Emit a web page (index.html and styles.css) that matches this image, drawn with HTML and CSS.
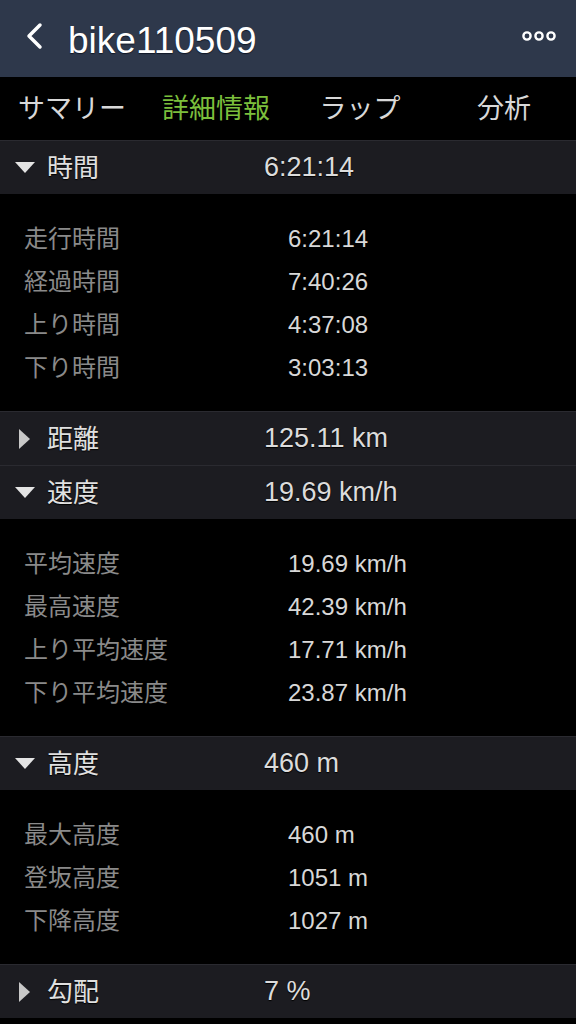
FILE: index.html
```html
<!DOCTYPE html>
<html lang="ja">
<head>
  <meta charset="UTF-8" />
  <meta name="viewport" content="width=device-width, initial-scale=1.0" />
  <title>bike110509</title>
  <link rel="stylesheet" href="styles.css">
</head>
<body>
  <header class="topbar">
    <svg class="back" width="20" height="28" viewBox="0 0 20 28">
      <path d="M15 3 L4 14 L15 25" fill="none" stroke="#fff" stroke-width="3.5" stroke-linecap="round" stroke-linejoin="round"/>
    </svg>
    <h1 class="title">bike110509</h1>
    <svg class="more" width="34" height="12" viewBox="0 0 34 12">
      <circle cx="5" cy="6" r="3.6" fill="none" stroke="#fff" stroke-width="2.4"/>
      <circle cx="17" cy="6" r="3.6" fill="none" stroke="#fff" stroke-width="2.4"/>
      <circle cx="29" cy="6" r="3.6" fill="none" stroke="#fff" stroke-width="2.4"/>
    </svg>
  </header>

  <nav class="tabs">
    <span class="tab">サマリー</span>
    <span class="tab active">詳細情報</span>
    <span class="tab">ラップ</span>
    <span class="tab">分析</span>
  </nav>

  <section class="group">
    <div class="group-head">
      <span class="tri down"></span>
      <span class="head-label">時間</span>
      <span class="head-value">6:21:14</span>
    </div>
    <div class="rows">
      <div class="row"><span class="row-label">走行時間</span><span class="row-value">6:21:14</span></div>
      <div class="row"><span class="row-label">経過時間</span><span class="row-value">7:40:26</span></div>
      <div class="row"><span class="row-label">上り時間</span><span class="row-value">4:37:08</span></div>
      <div class="row"><span class="row-label">下り時間</span><span class="row-value">3:03:13</span></div>
    </div>
  </section>

  <section class="group">
    <div class="group-head">
      <span class="tri right"></span>
      <span class="head-label">距離</span>
      <span class="head-value">125.11 km</span>
    </div>
  </section>

  <section class="group">
    <div class="group-head">
      <span class="tri down"></span>
      <span class="head-label">速度</span>
      <span class="head-value">19.69 km/h</span>
    </div>
    <div class="rows">
      <div class="row"><span class="row-label">平均速度</span><span class="row-value">19.69 km/h</span></div>
      <div class="row"><span class="row-label">最高速度</span><span class="row-value">42.39 km/h</span></div>
      <div class="row"><span class="row-label">上り平均速度</span><span class="row-value">17.71 km/h</span></div>
      <div class="row"><span class="row-label">下り平均速度</span><span class="row-value">23.87 km/h</span></div>
    </div>
  </section>

  <section class="group">
    <div class="group-head">
      <span class="tri down"></span>
      <span class="head-label">高度</span>
      <span class="head-value">460 m</span>
    </div>
    <div class="rows">
      <div class="row"><span class="row-label">最大高度</span><span class="row-value">460 m</span></div>
      <div class="row"><span class="row-label">登坂高度</span><span class="row-value">1051 m</span></div>
      <div class="row"><span class="row-label">下降高度</span><span class="row-value">1027 m</span></div>
    </div>
  </section>

  <section class="group">
    <div class="group-head">
      <span class="tri right"></span>
      <span class="head-label">勾配</span>
      <span class="head-value">7 %</span>
    </div>
  </section>
</body>
</html>
```

FILE: styles.css
```css
body {
  margin: 0;
  background-color: #000000;
  color: #ffffff;
  font-family: "Liberation Sans", "Noto Sans CJK JP", sans-serif;
  overflow: hidden;
}

.topbar {
  height: 77px;
  background-color: #2e384b;
  display: flex;
  align-items: center;
  padding: 0 20px 0 25px;
  box-sizing: border-box;
}

.back {
  margin-top: -6px;
}

.title {
  flex: 1;
  margin: 0 0 0 23px;
  font-size: 37px;
  font-weight: normal;
  color: #ffffff;
  text-shadow: 0 1px 1px #111827;
  padding-top: 4px;
}

.more {
  margin-top: -6px;
}

.tabs {
  height: 63px;
  display: flex;
  align-items: center;
  background-color: #000;
}

.tab {
  flex: 1;
  text-align: center;
  font-size: 27px;
  color: #d8d8d8;
  margin-top: -4px;
}

.tab.active {
  color: #7cbf3c;
}

.group-head {
  height: 54px;
  background-color: #1c1c21;
  border-top: 1px solid #2a2a30;
  box-sizing: border-box;
  display: flex;
  align-items: center;
  color: #e0e0e0;
  text-shadow: 0 1px 1px #000;
}

.tri {
  width: 0;
  height: 0;
}

.tri.down {
  margin-left: 15px;
  border-left: 10px solid transparent;
  border-right: 10px solid transparent;
  border-top: 11px solid #e4e4e4;
}

.tri.right {
  margin-left: 19px;
  margin-right: 5px;
  border-top: 10px solid transparent;
  border-bottom: 10px solid transparent;
  border-left: 11px solid #c8c8c8;
}

.head-label {
  width: 217px;
  margin-left: 12px;
  font-size: 26px;
  margin-top: -4px;
}

.head-value {
  font-size: 27px;
  color: #dcdcdc;
}

.rows {
  padding: 23px 0 22px;
}

.row {
  height: 43px;
  display: flex;
  align-items: center;
}

.row-label {
  width: 264px;
  padding-left: 24px;
  font-size: 24px;
  color: #8a8a8a;
  margin-top: -4px;
}

.row-value {
  font-size: 24px;
  color: #d8d8d8;
}
```
